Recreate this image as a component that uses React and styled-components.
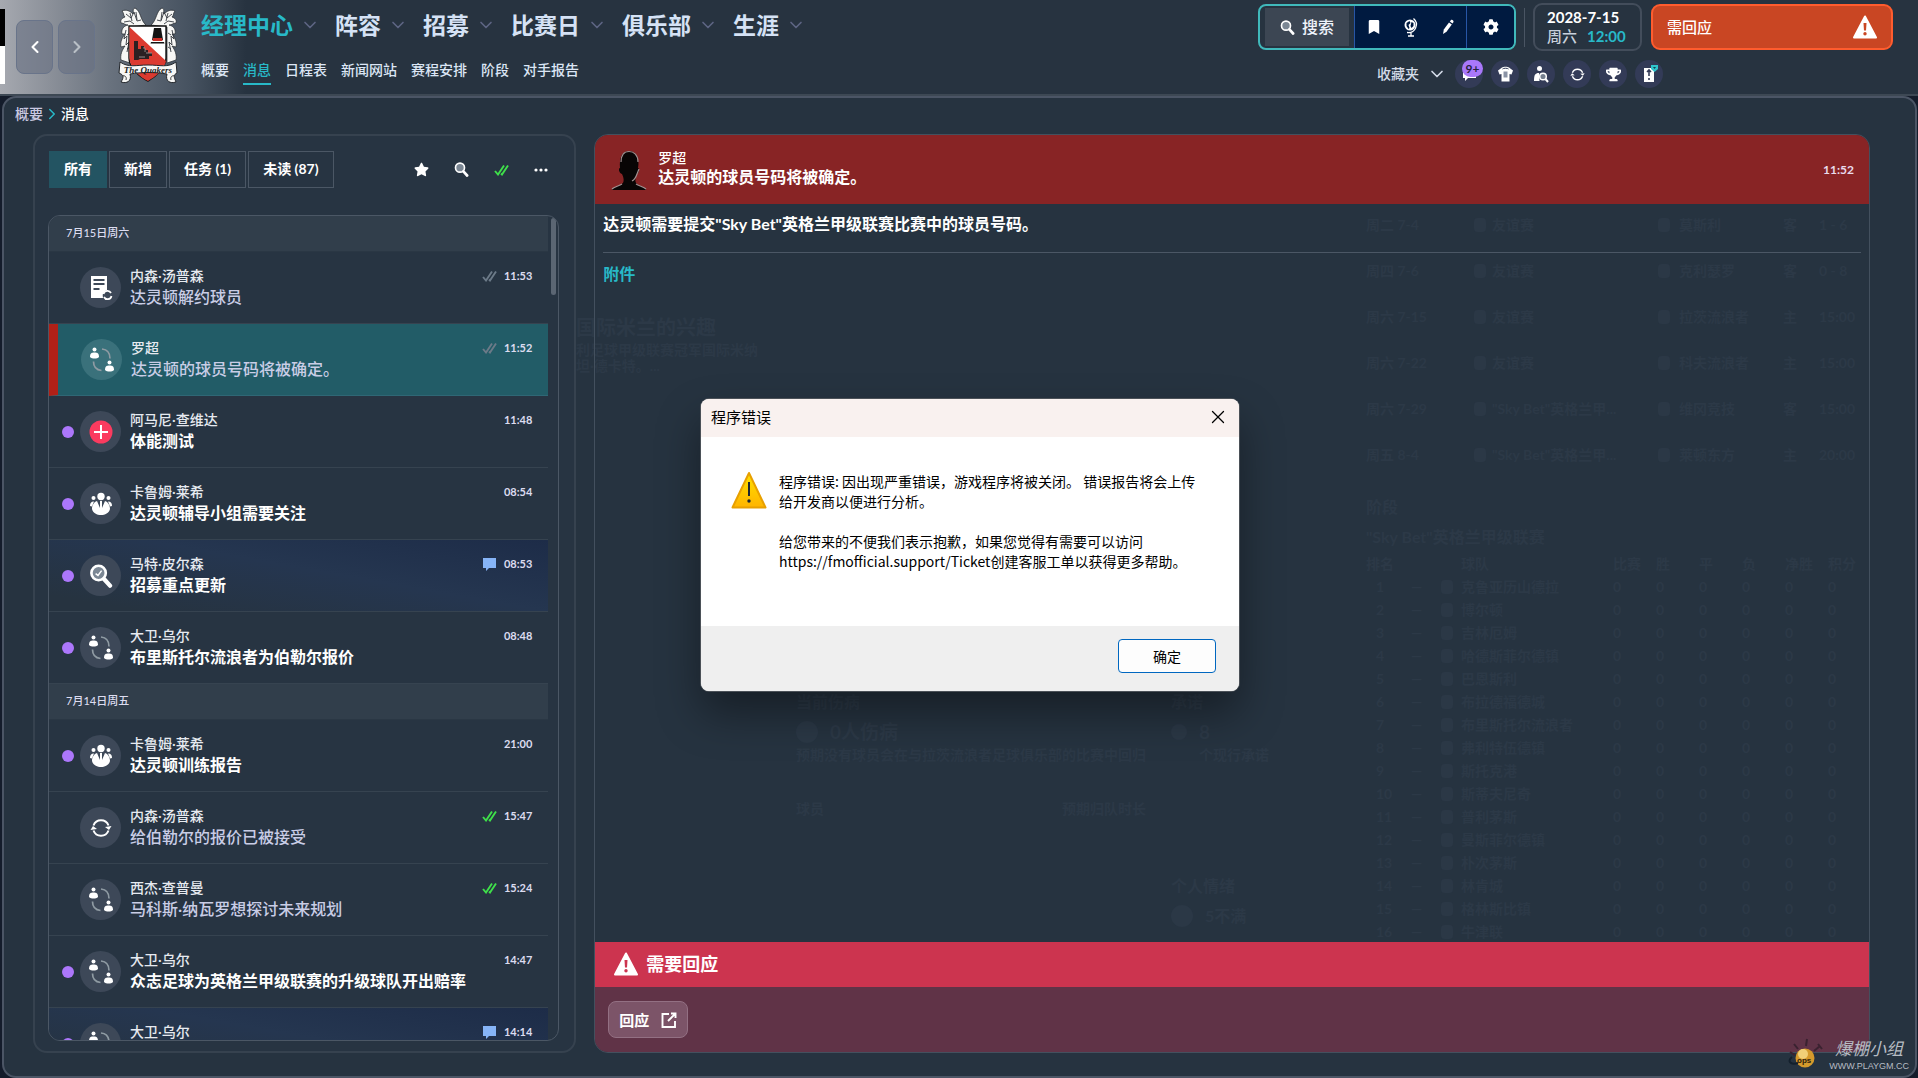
import styled, { createGlobalStyle, css } from "styled-components";
import { FaBookmark, FaCog, FaStar, FaTrophy } from "react-icons/fa";
import { ChevronDown, ChevronLeft, ChevronRight, X } from "lucide-react";

const GlobalStyle = createGlobalStyle`
  * {
    box-sizing: border-box;
  }
  body {
    margin: 0;
    background: #141c2b;
    font-family: Lato, "Noto Sans CJK SC", sans-serif;
    color: #fff;
  }
  button {
    font: inherit;
    color: inherit;
    background: none;
    border: 0;
    padding: 0;
  }
  a {
    color: inherit;
    text-decoration: none;
  }
  svg {
    display: block;
    flex: none;
  }
`;

/* ---------- data ---------- */

const mainNav = ["经理中心", "阵容", "招募", "比赛日", "俱乐部", "生涯"];
const subNav = ["概要", "消息", "日程表", "新闻网站", "赛程安排", "阶段", "对手报告"];
const filters = ["所有", "新增", "任务 (1)", "未读 (87)"];

const inbox = [
  {
    day: "7月15日周六",
    messages: [
      { from: "内森·汤普森", title: "达灵顿解约球员", time: "11:53", icon: "contract", mark: "read" },
      { from: "罗超", title: "达灵顿的球员号码将被确定。", time: "11:52", icon: "people", mark: "read", selected: true },
      { from: "阿马尼·查维达", title: "体能测试", time: "11:48", icon: "medical", unread: true },
      { from: "卡鲁姆·莱希", title: "达灵顿辅导小组需要关注", time: "08:54", icon: "group", unread: true },
      { from: "马特·皮尔森", title: "招募重点更新", time: "08:53", icon: "scout", mark: "chat", unread: true, glow: true },
      { from: "大卫·乌尔", title: "布里斯托尔流浪者为伯勒尔报价", time: "08:48", icon: "people", unread: true },
    ],
  },
  {
    day: "7月14日周五",
    messages: [
      { from: "卡鲁姆·莱希", title: "达灵顿训练报告", time: "21:00", icon: "group", unread: true },
      { from: "内森·汤普森", title: "给伯勒尔的报价已被接受", time: "15:47", icon: "cycle", mark: "done" },
      { from: "西杰·查普曼", title: "马科斯·纳瓦罗想探讨未来规划", time: "15:24", icon: "people", mark: "done" },
      { from: "大卫·乌尔", title: "众志足球为英格兰甲级联赛的升级球队开出赔率", time: "14:47", icon: "people", unread: true },
      { from: "大卫·乌尔", title: "", time: "14:14", icon: "people", mark: "chat", unread: true, glow: true },
    ],
  },
];

const fixtures = [
  ["周二 7-4", "友谊赛", "莫斯利", "客", "1 - 6"],
  ["周四 7-6", "友谊赛", "克利瑟罗", "客", "0 - 8"],
  ["周六 7-15", "友谊赛", "拉茨流浪者", "主", "15:00"],
  ["周六 7-22", "友谊赛", "科夫流浪者", "主", "15:00"],
  ["周六 7-29", "\"Sky Bet\"英格兰甲...", "维冈竞技", "客", "15:00"],
  ["周五 8-4", "\"Sky Bet\"英格兰甲...", "莱顿东方", "主", "20:00"],
];

const clubs = [
  "克鲁亚历山德拉", "博尔顿", "吉林厄姆", "哈德斯菲尔德镇", "巴恩斯利", "布拉德福德城",
  "布里斯托尔流浪者", "弗利特伍德镇", "斯托克港", "斯蒂夫尼奇", "普利茅斯", "曼斯菲尔德镇",
  "朴次茅斯", "林肯城", "格林斯比镇", "牛津联",
];
const leagueHeads = ["比赛", "胜", "平", "负", "净胜", "积分"];

/* ---------- drawings ---------- */

const Crest = () => (
  <svg width="64" height="80" viewBox="9 6 64 80" role="img" aria-label="The Quakers">
    <g fill="#f7f7f5" stroke="#22262b" strokeWidth="0.7">
      <path d="M38 25C32 20 33 11 27 8c-3 1-1 4-2 6-3-3-7-5-11-3 2 2 1 4 3 6-3 1-5 3-4 6 3 0 4 2 7 2-5 1-7 5-6 9l3 0c-3 4-5 8-4 13l4-1c-3 4-5 9-4 14l9 3V27z" />
      <path d="M43 25C49 20 48 11 54 8c3 1 1 4 2 6 3-3 7-5 11-3-2 2-1 4-3 6 3 1 5 3 4 6-3 0-4 2-7 2 5 1 7 5 6 9l-3 0c3 4 5 8 4 13l-4-1c3 4 5 9 4 14l-9 3V27z" />
    </g>
    <g stroke="#33383e" strokeWidth="0.9" fill="none">
      <path d="M18 14l5 4 3-6 3 9 4-1M16 22l6-1 4 3M18 30l-2 9 3-3-1 9 3-3-2 10M64 14l-5 4-3-6-3 9-4-1M66 22l-6-1-4 3M64 30l2 9-3-3 1 9-3-3 2 10" />
      <path d="M22 13l2 8M28 12l1 8M60 13l-2 8M54 12l-1 8M19 35l3-2M19 49l3-2M63 35l-3-2M63 49l-3-2" />
    </g>
    <path d="M21 26h37v32c0 9-10 19-18 23-9-4-19-14-19-23z" fill="#fff" stroke="#111" strokeWidth="1.4" />
    <path d="M21.500 27L58 61c-2 9-11 16-18 20-9-4-18.500-14-18.500-23z" fill="#dc3a30" />
    <path d="M46 28h7l2 12h-11z" fill="#131313" />
    <path d="M45 38h9l0.500 3h-10z" fill="#c92e27" />
    <path d="M43 42h13l0.500 1.500h-14z" fill="#131313" />
    <path d="M26 41h4v8h3v-3h3v4h4v3h4v3h-3v3h-9l-2 1h-4z" fill="#2b2022" />
    <path d="M35 48h2v4M38 53h6M31 57h6" stroke="#968c8c" strokeWidth="1" />
    <path d="M12 62c9 6 16 3 28 3s20 3 28-3l1 11c-4 2-3 4-1 9-6 2-11-1-9-8-13-2-25-2-37 0 2 7-3 10-9 8 3-5 3-7-2-9z" fill="#f7f7f5" stroke="#22262b" strokeWidth="1" />
    <path d="M14 76c3-1 5 1 4 4M67 76c-3-1-5 1-4 4" fill="none" stroke="#444" />
    <text x="40" y="73" textAnchor="middle" fontFamily="Liberation Serif, serif" fontStyle="italic" fontWeight="700" fontSize="9" fill="#222">
      The Quakers
    </text>
  </svg>
);

const Lens = ({ size = 16, tick }) => (
  <svg width={size} height={size} viewBox="0 0 20 20">
    <circle cx="8" cy="7.500" r="6" fill="#7b8794" stroke="#fff" strokeWidth="2.200" />
    <path d="M12.500 12.500l5 5.500" stroke="#fff" strokeWidth="3.600" strokeLinecap="round" />
    {tick && <path d="M5.500 8l2 1.500 3-4" fill="none" stroke="#fff" strokeWidth="1.200" />}
  </svg>
);

const Globe = () => (
  <svg width="16" height="20" viewBox="0 0 16 20">
    <circle cx="7" cy="8" r="5.500" fill="#fff" />
    <path d="M3.500 6l3-2 1 2-2 2 1 3-1 1-2-3zM8.500 5l2 1 0 3-2 2-1-2z" fill="#001a40" />
    <path d="M10.500 1.500A8 8 0 0 1 4 15.500M8 16v2.500M5 19h6" fill="none" stroke="#fff" strokeWidth="1.300" />
  </svg>
);

const Pencil = () => (
  <svg width="12" height="16" viewBox="0 0 12 16" fill="#fff">
    <path d="M1 15l0.800-4.500L7 3.500l2.800 2L4.500 12.800z" />
    <path d="M7.800 2.500L9 1c1-0.800 3 0.500 2.500 2l-1 1.500z" />
  </svg>
);

const Kit = () => (
  <svg width="17" height="16" viewBox="0 0 17 16">
    <path d="M5 1.500C6 0.500 11 0.500 12 1.500l4 3-1.500 4-2-0.500v7.500h-8V8l-2 0.500L1 4.500z" fill="#fff" />
    <path d="M5.500 3c1-1 5-1 6 0" fill="none" stroke="#333b57" strokeWidth="1" />
    <path d="M6.500 5.500h4v6h-4z" fill="#8a93a5" />
  </svg>
);

const Warning = ({ size = 24, hole }) => (
  <svg width={size} height={size} viewBox="0 0 24 24">
    <path d="M12 1.500L23 22.500H1z" fill="#fff" stroke="#fff" strokeWidth="2" strokeLinejoin="round" />
    <path d="M10.500 8h3l-0.500 7.500h-2z" fill={hole} />
    <circle cx="12" cy="18.700" r="1.700" fill={hole} />
  </svg>
);

const Ticks = ({ color }) => (
  <svg width="15" height="12" viewBox="0 0 15 12">
    <path d="M1 7l3 3.500L10 1.500M7 9.500l1 1L14 1.500" fill="none" stroke={color} strokeWidth="1.900" />
  </svg>
);

const Bubble = () => (
  <svg width="15" height="14" viewBox="0 0 15 14">
    <path d="M1 1h13v10H7l-3 3v-3H1z" fill="#86b4f7" />
  </svg>
);

const Cycle = ({ size = 22 }) => (
  <svg width={size} height={size} viewBox="0 0 22 22" fill="none" stroke="#fff" strokeWidth="2">
    <path d="M3.500 8.500a8 8 0 0 1 15 0M18.500 13.500a8 8 0 0 1-15 0" />
    <path d="M21.500 9l-2.500 4-4-3zM0.500 13l2.500-4 4 3z" fill="#fff" stroke="none" />
  </svg>
);

const PeopleSwap = () => (
  <svg width="26" height="26" viewBox="0 0 26 26">
    <g fill="#fff">
      <circle cx="5.500" cy="2.500" r="2" />
      <path d="M1 10c0-4 2-4.500 4.500-4.500S10 6 10 10c-2 2-7 2-9 0z" />
      <circle cx="20.500" cy="15.500" r="2" />
      <path d="M16 23c0-4 2-4.500 4.500-4.500S25 19 25 23c-2 2-7 2-9 0z" />
    </g>
    <path d="M13 2c5 0.500 8 4 8 9.500M4.500 14.500c0 5 3 8.500 8 9" fill="none" stroke="#8f9ba3" strokeWidth="1.700" />
  </svg>
);

const Contract = () => (
  <svg width="24" height="26" viewBox="0 0 24 26">
    <path d="M2 1h16v14a6 6 0 0 0-4 8H2z" fill="#fff" />
    <path d="M4.500 5h11M4.500 9h11M4.500 14h6" stroke="#3d4858" strokeWidth="1.800" />
    <path d="M14.500 19a4 4 0 0 1 7.500-1M22.500 21a4 4 0 0 1-7.500 1" fill="none" stroke="#fff" strokeWidth="1.700" />
  </svg>
);

const Medical = () => (
  <svg width="24" height="24" viewBox="0 0 24 24">
    <circle cx="12" cy="12" r="11.500" fill="#fb3b5f" />
    <path d="M12 5v14M5 12h14" stroke="#fff" strokeWidth="2" />
  </svg>
);

const Group = () => (
  <svg width="24" height="24" viewBox="0 0 24 24" fill="#fff">
    <circle cx="12" cy="4.500" r="3.700" />
    <circle cx="4.500" cy="6" r="2" />
    <circle cx="19.500" cy="6" r="2" />
    <path d="M1 14c0-3 1-4.500 4-4.500l-2 5zM23 14c0-3-1-4.500-4-4.500l2 5z" />
    <path d="M3 17c0-4 2-7 5-8l3 7V9h2v7l3-7c3 1 5 4 5 8-1 4-5 6-9 6s-8-2-9-6z" />
  </svg>
);

const Chat = () => (
  <svg width="15" height="14" viewBox="0 0 15 14">
    <path d="M1 2h13v9H6l-3 3v-3H1z" fill="#fff" />
  </svg>
);

const Scout = () => (
  <svg width="15" height="17" viewBox="0 0 15 17">
    <circle cx="5.500" cy="2.500" r="2.500" fill="#fff" />
    <path d="M0 15c0-6 1-8 5-8l0.500 8z" fill="#fff" />
    <circle cx="9" cy="10.500" r="3.300" fill="#76808f" stroke="#fff" strokeWidth="1.500" />
    <path d="M11.500 13l2.500 3" stroke="#fff" strokeWidth="2" />
  </svg>
);

const Notes = () => (
  <svg width="18" height="18" viewBox="0 0 18 18">
    <path d="M4 3h10v14H4z" fill="#fff" />
    <path d="M9 5v6M7 7l2-2 2 2M9 13v2" stroke="#333b57" strokeWidth="1.600" fill="none" />
    <path d="M11 0h7v4l-3.500 3L11 4z" fill="#2fc4cc" />
    <path d="M13 2h3l-1.500 2z" fill="#14404c" />
  </svg>
);

const Portrait = () => (
  <svg width="36" height="40" viewBox="0 0 36 40">
    <path d="M1 40c1-3 7-4 11-7 1-2 1-5-1-9-3-1-4-6-2-6C8 8 11 1 18 1s11 7 9 17c2 0 1 5-1 6-2 4-2 7-1 9 3 3 9 4 10 7z" fill="#080505" />
    <path d="M10 12C10 5 13 1.500 18 1.500S27 5 27 12M28 19l-2 5c-1 3-3 6-5 7M1 39c2-2 7-3 10-5M35 39c-2-2-7-3-10-5" fill="none" stroke="#a08f8f" strokeWidth="1.200" />
  </svg>
);

const DialogWarning = () => (
  <svg width="36" height="38" viewBox="0 0 36 38">
    <defs>
      <linearGradient id="amber" x1="0" y1="0" x2="0" y2="1">
        <stop offset="0" stopColor="#ffe100" />
        <stop offset="1" stopColor="#ffb400" />
      </linearGradient>
    </defs>
    <path d="M18 2L34.500 36.500H1.500z" fill="url(#amber)" stroke="#e8a000" strokeWidth="2" strokeLinejoin="round" />
    <path d="M18 11v14" stroke="#1c2733" strokeWidth="2" />
    <circle cx="18" cy="30" r="1.700" fill="#1c2733" />
  </svg>
);

const OpenOut = () => (
  <svg width="16" height="16" viewBox="0 0 16 16" fill="none" stroke="#fff" strokeWidth="1.900">
    <path d="M8 2H1.500v13H14V9" />
    <path d="M10 1.500h4.500V6M14 2L7 9" />
  </svg>
);

const Bomb = () => (
  <svg width="38" height="34" viewBox="0 0 38 34">
    <path d="M7 6l4 5M20 1l-1 7M33 8l-6 5M3 14l5 3M31 6l4 5" stroke="#3a2230" strokeWidth="2" />
    <circle cx="18" cy="20" r="9.500" fill="#d59a2c" />
    <circle cx="16" cy="16" r="5" fill="#f1d078" />
    <path d="M5 19c-6 5 0 8 6 6" fill="none" stroke="#14202c" strokeWidth="2" />
    <text x="10" y="25" fontFamily="Liberation Sans, sans-serif" fontSize="8" fontWeight="700" fill="#2a1a0c">ops</text>
  </svg>
);

const messageIcons = {
  contract: <Contract />,
  people: <PeopleSwap />,
  medical: <Medical />,
  group: <Group />,
  scout: <Lens size={24} tick />,
  cycle: <Cycle />,
};

const marks = {
  read: <Ticks color="#6c7a88" />,
  done: <Ticks color="#3fe04a" />,
  chat: <Bubble />,
};

/* ---------- header ---------- */

const Page = styled.div`
  position: relative;
  height: 100vh;
  display: flex;
  flex-direction: column;
  overflow: hidden;
`;

const Header = styled.header`
  flex: none;
  height: 96px;
  display: flex;
  align-items: flex-start;
  padding-right: 25px;
  border-bottom: 2px solid #3d4854;
  background: linear-gradient(90deg, #a6a9b0 0, #8b9099 50px, #69727e 110px, #465260 190px, #273340 246px);
`;

const Strip = styled.div`
  width: 5px;
  height: 75px;
  margin-top: 9px;
  background: linear-gradient(#000 50%, #fff 50%);
`;

const History = styled.div`
  display: flex;
  gap: 5px;
  padding: 20px 0 0 11px;
`;

const HistoryButton = styled.button`
  width: 37px;
  height: 54px;
  display: grid;
  place-items: center;
  border: 1px solid #69748a;
  border-radius: 8px;
  background: rgba(104, 112, 130, 0.6);
  color: ${(props) => (props.disabled ? "#b9bfc6" : "#fff")};
`;

const Logo = styled.a`
  padding: 6px 0 0 22px;
`;

const Navs = styled.div`
  flex: 1;
  padding: 8px 0 0 20px;
`;

const MainNav = styled.nav`
  height: 34px;
  display: flex;
  align-items: center;
  gap: 15px;
`;

const MainLink = styled.a`
  display: flex;
  align-items: center;
  gap: 7px;
  font-size: 23px;
  line-height: 34px;
  font-weight: 700;
  color: ${(props) => (props.$active ? "#28b9c8" : "#d5e2f5")};
  svg {
    color: #5d6583;
  }
`;

const SubNav = styled.nav`
  display: flex;
  gap: 14px;
  margin-top: 15px;
`;

const SubLink = styled.a`
  font-size: 14px;
  line-height: 26px;
  font-weight: 500;
  color: ${(props) => (props.$active ? "#28b9c8" : "#dce6f5")};
  border-bottom: 2px solid ${(props) => (props.$active ? "#28b9c8" : "transparent")};
`;

const Tools = styled.div`
  padding-top: 3px;
`;

const ToolRow = styled.div`
  height: 48px;
  display: flex;
  align-items: center;
`;

const SearchGroup = styled.div`
  height: 46px;
  display: flex;
  border: 2px solid #40b9bb;
  border-radius: 8px;
  overflow: hidden;
`;

const SearchButton = styled.button`
  width: 84px;
  margin: 2px 5px;
  display: flex;
  align-items: center;
  justify-content: center;
  gap: 7px;
  background: #3c4653;
  font-size: 16px;
  line-height: 24px;
  font-weight: 500;
  color: #eef3fb;
`;

const Shortcuts = styled.div`
  display: flex;
  background: #001a40;
  border-left: 1px solid #2756a6;
`;

const Shortcut = styled.button`
  width: ${(props) => (props.$wide ? 47 : 37)}px;
  display: grid;
  place-items: center;
`;

const Rule = styled.div`
  width: 1px;
  height: 39px;
  margin: 0 8px;
  background: #4a5563;
`;

const DateBox = styled.div`
  width: 109px;
  height: 48px;
  padding: 3px 12px;
  border: 2px solid #434d5b;
  border-radius: 9px;
  font-size: 15px;
  line-height: 19px;
  font-weight: 700;
  white-space: nowrap;
`;

const Clock = styled.div`
  display: flex;
  gap: 10px;
  font-weight: 500;
  color: #c8d0dc;
  b {
    font-weight: 700;
    color: #28b9c8;
  }
`;

const Alert = styled.button`
  width: 242px;
  height: 46px;
  margin-left: 9px;
  padding: 0 14px;
  display: flex;
  align-items: center;
  justify-content: space-between;
  border: 2px solid #ff5c2e;
  border-radius: 9px;
  background: #c94623;
  font-size: 15px;
  line-height: 22px;
  font-weight: 500;
`;

const Favourites = styled.div`
  display: flex;
  align-items: center;
  gap: 8px;
  padding: 9px 0 0 119px;
`;

const FavouritesButton = styled.button`
  display: flex;
  align-items: center;
  gap: 8px;
  font-size: 14px;
  line-height: 20px;
  font-weight: 500;
  color: #d3dbe8;
`;

const RoundButton = styled.button`
  position: relative;
  width: 28px;
  height: 28px;
  display: grid;
  place-items: center;
  border-radius: 50%;
  background: #333b57;
`;

const Badge = styled.span`
  position: absolute;
  top: 0;
  right: 0;
  width: 21px;
  height: 17px;
  border-radius: 9px;
  background: #a978fa;
  color: #26233e;
  font-size: 12px;
  line-height: 17px;
  font-weight: 700;
`;

/* ---------- inbox ---------- */

const Main = styled.main`
  position: relative;
  flex: 1;
  min-height: 0;
  display: flex;
  flex-direction: column;
  margin: 0 1px 0 2px;
  padding: 0 45px 23px 29px;
  border: 2px solid #4b5565;
  border-radius: 14px;
  background: #263340;
`;

const Crumbs = styled.nav`
  position: relative;
  display: flex;
  align-items: center;
  height: 36px;
  flex: none;
  padding-bottom: 4px;
  margin-left: -18px;
  font-size: 14px;
  line-height: 20px;
  font-weight: 500;
  color: #c9c8e0;
  b {
    font-weight: 500;
    color: #fff;
  }
`;

const Columns = styled.div`
  position: relative;
  flex: 1;
  min-height: 0;
  display: grid;
  grid-template-columns: minmax(440px, 543fr) 1275fr;
  grid-template-rows: minmax(0, 1fr);
  gap: 18px;
`;

const Inbox = styled.section`
  display: flex;
  flex-direction: column;
  padding: 15px 15px 10px 13px;
  border: 2px solid #36424f;
  border-radius: 14px;
  background: #273442;
`;

const Toolbar = styled.div`
  display: flex;
  gap: 2px;
  align-items: center;
  padding: 0 11px 0 1px;
  margin-bottom: 27px;
`;

const Filter = styled.button`
  height: 37px;
  padding: 0 14px 2px;
  font-size: 14px;
  line-height: 20px;
  font-weight: 700;
  white-space: nowrap;
  border: 1px solid ${(props) => (props.$active ? "#235462" : "#4b5765")};
  background: ${(props) => (props.$active ? "#235462" : "transparent")};
`;

const Actions = styled.div`
  flex: 1;
  display: flex;
  align-items: center;
  justify-content: flex-end;
  gap: 25px;
`;

const Frame = styled.div`
  flex: 1;
  min-height: 0;
  display: flex;
  border: 1px solid #4b5765;
  border-radius: 12px;
  overflow: hidden;
`;

const List = styled.div`
  flex: 1;
  min-width: 0;
`;

const Track = styled.div`
  width: 10px;
  padding: 2px 2px 0 3px;
`;

const Thumb = styled.div`
  height: 77px;
  border-radius: 3px;
  background: #5b6673;
`;

const Day = styled.h2`
  margin: 0;
  height: 36px;
  padding-left: 17px;
  font-size: 11px;
  line-height: 34px;
  font-weight: 500;
  color: #dcdcf0;
  background: #313e4b;
  border-bottom: 1px solid #2a3744;
`;

const Message = styled.button`
  width: 100%;
  height: 72px;
  display: flex;
  align-items: center;
  gap: 6px;
  padding: 0 16px 0 13px;
  text-align: left;
  border-bottom: 1px solid #364350;
  ${(props) =>
    props.$glow &&
    css`
      background: linear-gradient(190deg, #1d2c48 0%, #253650 45%, #263340 90%);
    `}
  ${(props) =>
    props.$selected &&
    css`
      padding-left: 5px;
      border-left: 9px solid #b12017;
      border-bottom-color: #2f6775;
      background: #225c67;
    `}
`;

const Dot = styled.span`
  width: 12px;
  height: 12px;
  border-radius: 50%;
  background: ${(props) => (props.$on ? "#ac77fb" : "transparent")};
`;

const Round = styled.span`
  width: 41px;
  height: 41px;
  flex: none;
  display: grid;
  place-items: center;
  border-radius: 50%;
  background: ${(props) => (props.$selected ? "#3a717b" : "#3d4858")};
`;

const Text = styled.span`
  flex: 1;
  min-width: 0;
  padding: 0 0 2px 3px;
`;

const From = styled.span`
  display: flex;
  align-items: center;
  gap: 7px;
  font-size: 14px;
  line-height: 20px;
  font-weight: 500;
  color: #e6eaf0;
`;

const Time = styled.time`
  font-size: 11px;
  font-weight: 700;
  color: #dcdcf0;
`;

const Spring = styled.span`
  flex: 1;
`;

const Title = styled.span`
  display: block;
  min-height: 22px;
  font-size: 16px;
  line-height: 22px;
  font-weight: ${(props) => (props.$unread ? 700 : 500)};
  white-space: nowrap;
  color: ${(props) => (props.$unread ? "#fff" : "#c9cde6")};
`;

/* ---------- message body ---------- */

const Detail = styled.article`
  display: flex;
  flex-direction: column;
  min-width: 0;
  border: 1px solid #43505e;
  border-radius: 14px;
  overflow: hidden;
`;

const DetailHeader = styled.header`
  flex: none;
  height: 69px;
  display: flex;
  align-items: center;
  gap: 11px;
  padding: 0 15px 0 16px;
  background: #882425;
`;

const DetailFrom = styled.div`
  flex: 1;
  padding-bottom: 4px;
  font-size: 14px;
  line-height: 18px;
  font-weight: 500;
`;

const Subject = styled.h1`
  margin: 0;
  font-size: 16px;
  line-height: 20px;
  font-weight: 700;
`;

const DetailTime = styled.time`
  font-size: 12px;
  font-weight: 700;
  color: #e8dcec;
`;

const DetailBody = styled.div`
  flex: 1;
  padding: 0 8px;
  font-size: 16px;
  line-height: 24px;
  font-weight: 700;
`;

const Lead = styled.p`
  margin: 0;
  padding: 8px 0 16px;
  border-bottom: 1px solid #4b5765;
`;

const Attachments = styled.h2`
  margin: 9px 0 0;
  font-size: 16px;
  line-height: 24px;
  font-weight: 700;
  color: #28b9c8;
`;

const Needed = styled.div`
  height: 45px;
  display: flex;
  align-items: center;
  gap: 8px;
  padding: 0 0 2px 19px;
  background: #cc344f;
  font-size: 18px;
  line-height: 26px;
  font-weight: 700;
`;

const Respond = styled.div`
  height: 65px;
  padding: 14px 13px;
  background: #603347;
`;

const RespondButton = styled.button`
  height: 37px;
  display: flex;
  align-items: center;
  gap: 12px;
  padding: 0 10px;
  border: 1px solid #937083;
  border-radius: 8px;
  background: #7c5468;
  font-size: 15px;
  line-height: 22px;
  font-weight: 700;
`;

/* ---------- dimmed dashboard under the message ---------- */

const Dashboard = styled.div`
  position: absolute;
  inset: 0 0 136px;
  overflow: hidden;
  display: grid;
  grid-template-columns: 195px 350px 170px 1fr;
  gap: 25px;
  padding-left: 572px;
  font-size: 14px;
  line-height: 20px;
  font-weight: 700;
  color: #2c3947;
`;

const DashColumn = styled.div`
  display: flex;
  flex-direction: column;
  padding-top: ${(props) => props.$top}px;
  white-space: nowrap;
`;

const DashHeading = styled.div`
  padding-top: ${(props) => props.$before || 0}px;
  font-size: ${(props) => props.$size || 16}px;
  line-height: 30px;
`;

const DashText = styled.p`
  margin: 0 0 ${(props) => props.$after || 0}px;
  line-height: 16px;
  white-space: normal;
`;

const DashRow = styled.div`
  display: flex;
  align-items: center;
  gap: 12px;
`;

const Fixture = styled.div`
  display: grid;
  grid-template-columns: 108px 18px 166px 21px 104px 36px 1fr;
  align-items: center;
  height: 46px;
`;

const Pip = styled.i`
  width: ${(props) => props.$size || 12}px;
  height: ${(props) => props.$size || 14}px;
  border-radius: ${(props) => (props.$size ? 50 : 30)}%;
  background: #2b3846;
`;

const Standings = styled.div`
  display: grid;
  grid-template-columns: 45px 30px 20px 152px repeat(6, 43px);
  grid-auto-rows: 23px;
  align-items: center;
`;

const Rank = styled.span`
  padding-left: 10px;
`;

/* ---------- dialog ---------- */

const Overlay = styled.div`
  position: absolute;
  inset: 0;
  display: grid;
  place-items: center;
  padding: 12px 0 0 22px;
`;

const Dialog = styled.section`
  width: 538px;
  border-radius: 8px;
  overflow: hidden;
  background: #fff;
  color: #000;
  font-family: "Noto Sans CJK SC", sans-serif;
  font-size: 14px;
  line-height: 20px;
  box-shadow: 0 0 0 1px #4b5158, 0 22px 44px rgba(0, 0, 0, 0.4);
`;

const DialogBar = styled.header`
  height: 38px;
  display: flex;
  align-items: center;
  justify-content: space-between;
  padding: 0 10px 2px;
  background: #f9f1ef;
  font-size: 15px;
`;

const DialogBody = styled.div`
  height: 189px;
  display: flex;
  gap: 12px;
  padding: 34px 38px 0 30px;
  p {
    margin: 0 0 20px;
  }
`;

const DialogFooter = styled.footer`
  display: flex;
  justify-content: flex-end;
  padding: 13px 23px 18px;
  background: #efefef;
`;

const Confirm = styled.button`
  width: 98px;
  height: 34px;
  border: 1px solid #0067c0;
  border-radius: 4px;
  background: #fdfdfd;
`;

const Watermark = styled.div`
  position: absolute;
  right: 9px;
  bottom: 6px;
  display: flex;
  align-items: flex-end;
  gap: 4px;
  font-size: 9px;
  line-height: 12px;
  color: #b7bcc3;
  text-align: center;
  font-family: "Liberation Sans", "Noto Sans CJK SC", sans-serif;
  b {
    display: block;
    font-size: 17px;
    line-height: 20px;
    font-weight: 400;
    font-style: italic;
  }
`;

const TopBar = () => (
  <Header>
    <Strip />
    <History>
      <HistoryButton aria-label="后退"><ChevronLeft size={20} strokeWidth={2.5} /></HistoryButton>
      <HistoryButton aria-label="前进" disabled><ChevronRight size={20} strokeWidth={2.5} /></HistoryButton>
    </History>
    <Logo href="#club"><Crest /></Logo>
    <Navs>
      <MainNav>
        {mainNav.map((name, i) => (
          <MainLink key={name} href="#" $active={i === 0}>
            {name}
            <ChevronDown size={20} />
          </MainLink>
        ))}
      </MainNav>
      <SubNav>
        {subNav.map((name, i) => (
          <SubLink key={name} href="#" $active={i === 1}>{name}</SubLink>
        ))}
      </SubNav>
    </Navs>
    <Tools>
      <ToolRow>
        <SearchGroup>
          <SearchButton><Lens size={15} />搜索</SearchButton>
          <Shortcuts>
            <Shortcut aria-label="书签"><FaBookmark size={14} /></Shortcut>
            <Shortcut aria-label="世界"><Globe /></Shortcut>
            <Shortcut aria-label="编辑"><Pencil /></Shortcut>
          </Shortcuts>
          <Shortcuts>
            <Shortcut $wide aria-label="设置"><FaCog size={16} /></Shortcut>
          </Shortcuts>
        </SearchGroup>
        <Rule />
        <DateBox>
          2028-7-15
          <Clock>周六 <b>12:00</b></Clock>
        </DateBox>
        <Alert>需回应<Warning hole="#c94623" /></Alert>
      </ToolRow>
      <Favourites>
        <FavouritesButton>收藏夹<ChevronDown size={20} /></FavouritesButton>
        <RoundButton aria-label="聊天"><Chat /><Badge>9+</Badge></RoundButton>
        <RoundButton aria-label="阵容"><Kit /></RoundButton>
        <RoundButton aria-label="球探"><Scout /></RoundButton>
        <RoundButton aria-label="转会"><Cycle size={15} /></RoundButton>
        <RoundButton aria-label="赛事"><FaTrophy size={15} /></RoundButton>
        <RoundButton aria-label="战术"><Notes /></RoundButton>
      </Favourites>
    </Tools>
  </Header>
);

const MessageRow = ({ message }) => (
  <Message $selected={message.selected} $glow={message.glow}>
    <Dot $on={message.unread} />
    <Round $selected={message.selected}>{messageIcons[message.icon]}</Round>
    <Text>
      <From>
        {message.from}
        <Spring />
        {marks[message.mark]}
        <Time>{message.time}</Time>
      </From>
      <Title $unread={message.unread}>{message.title}</Title>
    </Text>
  </Message>
);

const InboxPanel = () => (
  <Inbox>
    <Toolbar>
      {filters.map((name, i) => (
        <Filter key={name} $active={i === 0}>{name}</Filter>
      ))}
      <Actions>
        <button aria-label="收藏"><FaStar size={15} /></button>
        <button aria-label="搜索"><Lens size={15} /></button>
        <button aria-label="全部已读"><Ticks color="#3fe04a" /></button>
        <button aria-label="更多">
          <svg width="14" height="4" viewBox="0 0 14 4" fill="#fff">
            <circle cx="2" cy="2" r="1.600" />
            <circle cx="7" cy="2" r="1.600" />
            <circle cx="12" cy="2" r="1.600" />
          </svg>
        </button>
      </Actions>
    </Toolbar>
    <Frame>
      <List>
        {inbox.map((group) => (
          <div key={group.day}>
            <Day>{group.day}</Day>
            {group.messages.map((message) => (
              <MessageRow key={message.time} message={message} />
            ))}
          </div>
        ))}
      </List>
      <Track><Thumb /></Track>
    </Frame>
  </Inbox>
);

const DimmedDashboard = () => (
  <Dashboard aria-hidden="true">
    <DashColumn $top={214}>
      <DashHeading $size={20}>国际米兰的兴趣</DashHeading>
      <DashText $after={0}>利足球甲级联赛冠军国际米纳坦·德卡特。...</DashText>
    </DashColumn>
    <DashColumn $top={589}>
      <DashHeading>当前伤病</DashHeading>
      <DashRow>
        <Pip $size={22} />
        <DashHeading $size={19}>0人伤病</DashHeading>
      </DashRow>
      <DashText $after={36}>预期没有球员会在与拉茨流浪者足球俱乐部的比赛中回归</DashText>
      <DashRow>
        <span>球员</span>
        <Spring />
        <span>预期归队时长</span>
        <Pip $size={50} hidden />
      </DashRow>
    </DashColumn>
    <DashColumn $top={589}>
      <DashHeading>承诺</DashHeading>
      <DashRow>
        <Pip $size={16} />
        <DashHeading $size={19}>8</DashHeading>
      </DashRow>
      <DashText $after={108}>　　个现行承诺</DashText>
      <DashHeading>个人情绪</DashHeading>
      <DashRow>
        <Pip $size={22} />
        <DashHeading>5不满</DashHeading>
      </DashRow>
    </DashColumn>
    <DashColumn $top={104}>
      {fixtures.map(([date, cup, club, venue, score]) => (
        <Fixture key={date}>
          <span>{date}</span>
          <Pip />
          <span>{cup}</span>
          <Pip />
          <span>{club}</span>
          <span>{venue}</span>
          <span>{score}</span>
        </Fixture>
      ))}
      <DashHeading $before={14}>阶段</DashHeading>
      <DashHeading>"Sky Bet"英格兰甲级联赛</DashHeading>
      <Standings>
        <span>排名</span>
        <span />
        <span />
        <span>球队</span>
        {leagueHeads.map((name) => <span key={name}>{name}</span>)}
        {clubs.map((club, i) => [
          <Rank key={club + "rank"}>{i + 1}</Rank>,
          <span key={club + "move"}>—</span>,
          <Pip key={club + "pip"} />,
          <span key={club}>{club}</span>,
          ...leagueHeads.map((name) => <span key={club + name}>0</span>),
        ])}
      </Standings>
    </DashColumn>
  </Dashboard>
);

const DetailPanel = () => (
  <Detail>
    <DetailHeader>
      <Portrait />
      <DetailFrom>
        罗超
        <Subject>达灵顿的球员号码将被确定。</Subject>
      </DetailFrom>
      <DetailTime>11:52</DetailTime>
    </DetailHeader>
    <DetailBody>
      <Lead>达灵顿需要提交"Sky Bet"英格兰甲级联赛比赛中的球员号码。</Lead>
      <Attachments>附件</Attachments>
    </DetailBody>
    <Needed><Warning hole="#cc344f" />需要回应</Needed>
    <Respond>
      <RespondButton>回应<OpenOut /></RespondButton>
    </Respond>
  </Detail>
);

const ErrorDialog = () => (
  <Overlay>
    <Dialog role="alertdialog" aria-label="程序错误">
      <DialogBar>
        程序错误
        <button aria-label="关闭"><X size={22} strokeWidth={1.4} /></button>
      </DialogBar>
      <DialogBody>
        <DialogWarning />
        <div>
          <p>程序错误: 因出现严重错误，游戏程序将被关闭。 错误报告将会上传<br />给开发商以便进行分析。</p>
          <p>给您带来的不便我们表示抱歉，如果您觉得有需要可以访问<br />https://fmofficial.support/Ticket创建客服工单以获得更多帮助。</p>
        </div>
      </DialogBody>
      <DialogFooter>
        <Confirm>确定</Confirm>
      </DialogFooter>
    </Dialog>
  </Overlay>
);

const App = () => (
  <>
    <GlobalStyle />
    <Page>
      <TopBar />
      <Main>
        <DimmedDashboard />
        <Crumbs>
          <a href="#">概要</a>
          <ChevronRight size={18} color="#28b9c8" />
          <b>消息</b>
        </Crumbs>
        <Columns>
          <InboxPanel />
          <DetailPanel />
        </Columns>
      </Main>
      <ErrorDialog />
      <Watermark>
        <Bomb />
        <div>
          <b>爆棚小组</b>
          WWW.PLAYGM.CC
        </div>
      </Watermark>
    </Page>
  </>
);

export default App;
